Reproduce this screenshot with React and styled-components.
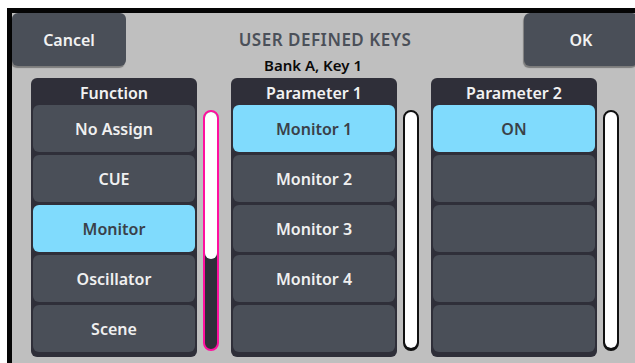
import styled, { createGlobalStyle } from 'styled-components';

const Global = createGlobalStyle`
    html, body {
        margin: 0;
        padding: 0;
        background: #ffffff;
        overflow: hidden;
    }
    body {
        font-family: "Noto Sans", "Open Sans", sans-serif;
    }
`;

const Page = styled.div`
    padding: 8px 0 0 7px;
    width: 635px;
    height: 363px;
    box-sizing: border-box;
    overflow: hidden;
`;

const Frame = styled.div`
    border-top: 5px solid #050505;
    border-left: 5px solid #050505;
    width: 626px;
    height: 360px;
    background: #bfbfbf;
`;

const Header = styled.div`
    display: grid;
    grid-template-columns: 114px 1fr 114px;
    height: 65px;
`;

const TopBtn = styled.button`
    height: 53px;
    border: none;
    border-radius: 6px;
    background: #4a4f58;
    color: #f2f2f2;
    font-family: inherit;
    font-size: 16px;
    font-weight: 600;
    box-shadow: -1px 2px 1px rgba(0, 0, 0, .35);
    cursor: pointer;
    padding: 0;
`;

const Titles = styled.div`
    display: flex;
    flex-direction: column;
    align-items: center;
    padding-top: 16px;
`;

const Title = styled.div`
    font-size: 17px;
    font-weight: 600;
    line-height: 22px;
    color: #4b5059;
    letter-spacing: 0.5px;
`;

const Sub = styled.div`
    margin-top: 5px;
    margin-right: 24px;
    font-size: 15px;
    font-weight: 600;
    line-height: 18px;
    color: #0a0a0a;
`;

const Body = styled.div`
    display: flex;
    gap: 12px;
    padding-left: 19px;
`;

const Column = styled.div`
    display: flex;
    gap: 6px;
`;

const Panel = styled.div`
    width: 166px;
    height: 279px;
    box-sizing: border-box;
    background: #2f2f39;
    border-radius: 6px;
    padding: 0 2px 2px;
    display: flex;
    flex-direction: column;
`;

const PanelHead = styled.div`
    height: 27px;
    display: flex;
    align-items: center;
    justify-content: center;
    padding-top: 2px;
    box-sizing: border-box;
    color: #f2f2f2;
    font-size: 16px;
    font-weight: 600;
`;

const List = styled.div`
    display: flex;
    flex-direction: column;
    gap: 3px;
`;

const Item = styled.div`
    height: 47px;
    border-radius: 6px;
    display: flex;
    align-items: center;
    justify-content: center;
    font-size: 16px;
    font-weight: 600;
    background: ${p => (p.$on ? '#80dbfd' : '#4a4f58')};
    color: ${p => (p.$on ? '#3a4149' : '#f0f0f0')};
`;

const Track = styled.div`
    width: 16px;
    height: 241px;
    margin-top: 32px;
    box-sizing: border-box;
    border: 2px solid ${p => (p.$active ? '#ff0f9f' : '#111111')};
    border-bottom-width: ${p => (p.$active ? '2px' : '3px')};
    border-radius: 8px;
    background: #2f2f39;
    overflow: hidden;
    display: flex;
    flex-direction: column;
`;

const Thumb = styled.div`
    background: #ffffff;
    border-radius: 0 0 6px 6px;
`;

const columns = [
    { title: 'Function', items: ['No Assign', 'CUE', 'Monitor', 'Oscillator', 'Scene'], sel: 2, active: true, thumb: 62 },
    { title: 'Parameter 1', items: ['Monitor 1', 'Monitor 2', 'Monitor 3', 'Monitor 4', ''], sel: 0, thumb: 100 },
    { title: 'Parameter 2', items: ['ON', '', '', '', ''], sel: 0, thumb: 100 },
];

const App = () => {
    return (
        <Page>
            <Global />
            <Frame>
                <Header>
                    <TopBtn>Cancel</TopBtn>
                    <Titles>
                        <Title>USER DEFINED KEYS</Title>
                        <Sub>Bank A, Key 1</Sub>
                    </Titles>
                    <TopBtn>OK</TopBtn>
                </Header>
                <Body>
                    {columns.map(col => (
                        <Column key={col.title}>
                            <Panel>
                                <PanelHead>{col.title}</PanelHead>
                                <List>
                                    {col.items.map((it, i) => (
                                        <Item key={i} $on={i === col.sel}>{it}</Item>
                                    ))}
                                </List>
                            </Panel>
                            <Track $active={col.active}>
                                <Thumb style={{ height: col.thumb + '%' }} />
                            </Track>
                        </Column>
                    ))}
                </Body>
            </Frame>
        </Page>
    );
};

export default App;
